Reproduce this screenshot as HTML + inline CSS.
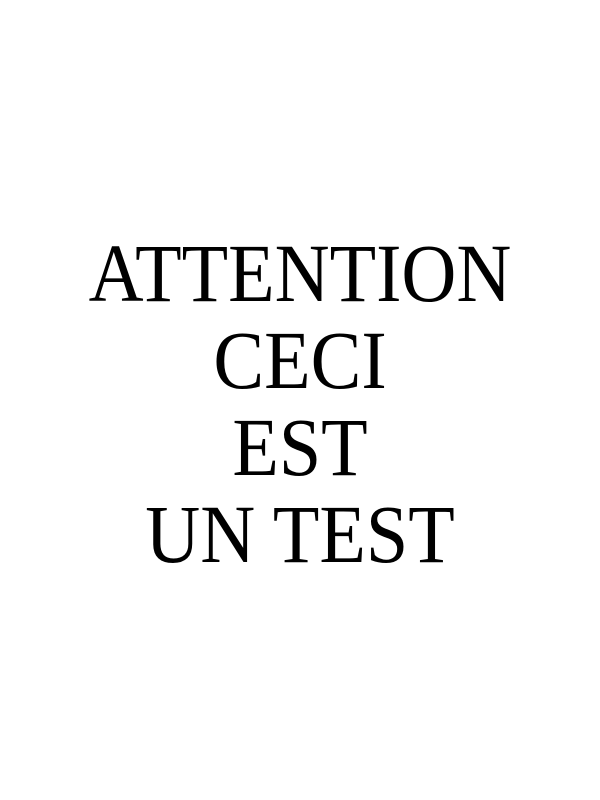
<!DOCTYPE html>
<html><head><meta charset="utf-8"><style>
html,body{margin:0;padding:0;background:#fff;width:600px;height:800px;overflow:hidden}
.t{position:absolute;left:0;top:230px;width:600px;text-align:center;font-family:"Liberation Serif",serif;font-size:83px;line-height:87px;color:#000;transform:scaleX(0.917);transform-origin:300px 0}
</style></head><body>
<div class="t">ATTENTION<br>CECI<br>EST<br>UN TEST</div>
</body></html>
